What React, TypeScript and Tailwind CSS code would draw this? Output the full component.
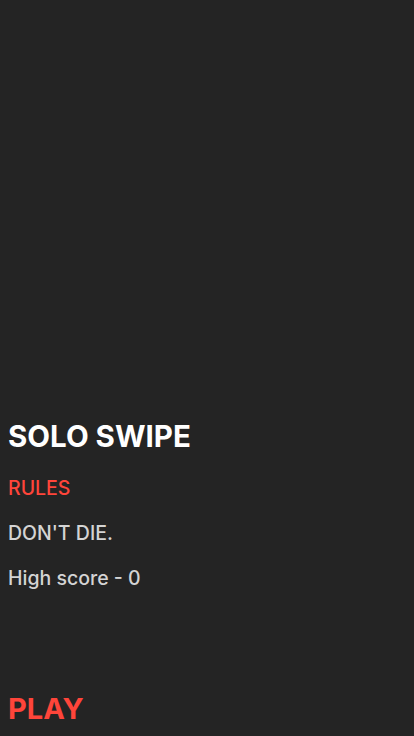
import React from 'react';

const App: React.FC = () => {
  return (
    <div
      className="flex h-[736px] w-full flex-col bg-[#242424] px-2"
      style={{ fontFamily: 'Inter, "Noto Sans", sans-serif' }}
    >
      <div className="flex-1" />
      <div className="flex flex-col">
        <h1 className="text-[29.5px] font-bold leading-[36px] text-white">SOLO SWIPE</h1>
        <p className="mt-[22px] text-[19.5px] font-medium leading-[24px] text-[#ff453a]">RULES</p>
        <p className="mt-[21px] text-[19.5px] font-medium leading-[24px] text-[#d4d4d4]">DON'T DIE.</p>
        <p className="mt-[21px] text-[19.5px] font-medium leading-[24px] text-[#d4d4d4]">High score - 0</p>
      </div>
      <div className="h-[102px]" />
      <button className="mb-[10px] self-start text-[29px] font-bold leading-[34px] text-[#ff453a]">PLAY</button>
    </div>
  );
};

export default App;
